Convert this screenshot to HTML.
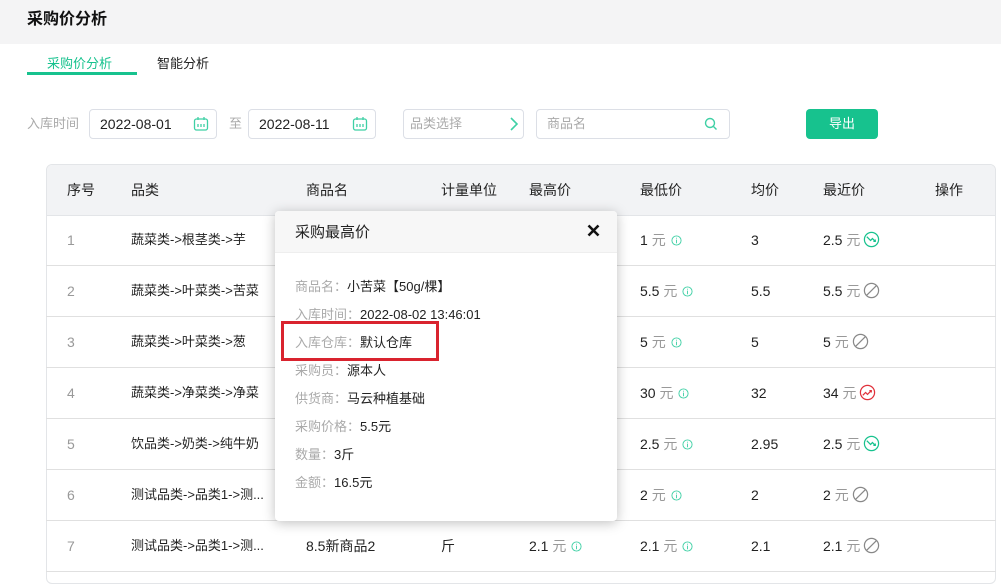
<!DOCTYPE html>
<html><head><meta charset="utf-8"><style>
*{margin:0;padding:0;box-sizing:border-box}
body{width:1001px;height:575px;overflow:hidden;background:#fff;font-family:"Liberation Sans","Noto Sans CJK SC",sans-serif;font-size:14px;color:#222;position:relative}
.a{position:absolute;white-space:nowrap}
.hdr{left:0;top:0;width:1001px;height:44px;background:#f4f4f5}
.box{position:absolute;border:1px solid #dcdfe6;border-radius:4px;height:30px;top:109px;background:#fff}
.box span{line-height:28px;top:0}
.ph{color:#aaa}
.tbl{left:46px;top:164px;width:950px;height:420px;border:1px solid #e3e5e8;border-radius:6px;overflow:hidden}
.th{left:0;top:0;width:950px;height:51px;background:#f2f3f5;border-bottom:1px solid #e3e5e8}
.g{color:#999}
.c{height:50px;line-height:50px}
.pop{left:275px;top:211px;width:342px;height:310px;background:#fff;border-radius:4px;box-shadow:0 2px 12px rgba(0,0,0,.25);overflow:hidden}
.pl{color:#aaa}
.pop .ln{left:20px;height:28px;line-height:28px;font-size:13px}
</style></head><body>
<div class="a hdr"></div>
<div class="a" style="left:27px;top:8px;line-height:24px;font-size:16px;font-weight:bold;color:#111">采购价分析</div>
<div class="a" style="left:47px;top:54px;line-height:20px;font-size:13px;color:#17c28e">采购价分析</div>
<div class="a" style="left:27px;top:72px;width:110px;height:3px;background:#17c28e"></div>
<div class="a" style="left:157px;top:54px;line-height:20px;font-size:13px;color:#222">智能分析</div>

<div class="a ph" style="left:27px;top:114px;line-height:20px;font-size:13px">入库时间</div>
<div class="box" style="left:89px;width:128px"><span class="a" style="left:10px">2022-08-01</span>
<svg class="a" style="left:103px;top:6px" width="16" height="16" viewBox="0 0 16 16" fill="none" stroke="#3fd0a5" stroke-width="1.3"><rect x="1.5" y="3" width="13" height="11" rx="2"/><path d="M5 1v3M11 1v3M5 8v3M8 8v3M11 8v3"/></svg></div>
<div class="a ph" style="left:229px;top:114px;line-height:20px;font-size:13px">至</div>
<div class="box" style="left:248px;width:128px"><span class="a" style="left:10px">2022-08-11</span>
<svg class="a" style="left:103px;top:6px" width="16" height="16" viewBox="0 0 16 16" fill="none" stroke="#3fd0a5" stroke-width="1.3"><rect x="1.5" y="3" width="13" height="11" rx="2"/><path d="M5 1v3M11 1v3M5 8v3M8 8v3M11 8v3"/></svg></div>
<div class="box" style="left:403px;width:121px"><span class="a ph" style="left:6px;font-size:13px">品类选择</span>
<svg class="a" style="left:105px;top:7px" width="10" height="14" viewBox="0 0 10 14" fill="none" stroke="#3fd0a5" stroke-width="1.6"><path d="M2 1l6 6-6 6"/></svg></div>
<div class="box" style="left:536px;width:194px"><span class="a ph" style="left:10px;font-size:13px">商品名</span>
<svg class="a" style="left:167px;top:7px" width="14" height="14" viewBox="0 0 14 14" fill="none" stroke="#3fd0a5" stroke-width="1.4"><circle cx="6" cy="6" r="4.5"/><path d="M9.5 9.5l3 3"/></svg></div>
<div class="a" style="left:806px;top:109px;width:72px;height:30px;background:#17c28e;border-radius:4px;color:#fff;text-align:center;line-height:30px;font-size:13px">导出</div>

<div class="a tbl">
<div class="a th"></div>
<div class="a c" style="left:20px;top:0">序号</div><div class="a c" style="left:84px;top:0">品类</div><div class="a c" style="left:259px;top:0">商品名</div><div class="a c" style="left:394px;top:0">计量单位</div><div class="a c" style="left:482px;top:0">最高价</div><div class="a c" style="left:593px;top:0">最低价</div><div class="a c" style="left:704px;top:0">均价</div><div class="a c" style="left:776px;top:0">最近价</div><div class="a c" style="left:888px;top:0">操作</div>
</div>
<div id="rows"></div>
<script>
var d=[["1","蔬菜类->根茎类->芋","","","","1","3","2.5","dn"],["2","蔬菜类->叶菜类->苦菜","","","","5.5","5.5","5.5","no"],["3","蔬菜类->叶菜类->葱","","","","5","5","5","no"],["4","蔬菜类->净菜类->净菜","","","","30","32","34","up"],["5","饮品类->奶类->纯牛奶","","","","2.5","2.95","2.5","dn"],["6","测试品类->品类1->测...","","","","2","2","2","no"],["7","测试品类->品类1->测...","8.5新商品2","斤","2.1","2.1","2.1","2.1","no"]];
var info='<svg width="11" height="11" viewBox="0 0 12 12" style="vertical-align:-1px;margin-left:5px" fill="none" stroke="#3fd0a5"><circle cx="6" cy="6" r="5"/><path d="M6 5v4M6 3v1"/></svg>';
var ic={dn:'<svg width="17" height="17" viewBox="0 0 18 18" style="vertical-align:-3px;margin-left:3px" fill="none" stroke="#17c28e" stroke-width="1.3"><circle cx="9" cy="9" r="7.5"/><path d="M4 6l4 4 2-2 3 3M13 9v2h-2"/></svg>',up:'<svg width="17" height="17" viewBox="0 0 18 18" style="vertical-align:-3px;margin-left:3px" fill="none" stroke="#e0303a" stroke-width="1.3"><circle cx="9" cy="9" r="7.5"/><path d="M4 12l3-3 2 2 4-4M11 7h2v2"/></svg>',no:'<svg width="17" height="17" viewBox="0 0 18 18" style="vertical-align:-3px;margin-left:3px" fill="none" stroke="#888" stroke-width="1.3"><circle cx="9" cy="9" r="7.5"/><path d="M4 14L14 4"/></svg>'};
var h='';
for(var i=0;i<d.length;i++){var r=d[i],y=215+51*i;
h+='<div class="a" style="left:46px;top:'+(y+50)+'px;width:950px;height:1px;background:#e0e0e0"></div>';
var t=y;
h+='<div class="a c g" style="left:67px;top:'+t+'px">'+r[0]+'</div>';
h+='<div class="a c" style="left:131px;top:'+t+'px;font-size:13px">'+r[1]+'</div>';
if(r[2])h+='<div class="a c" style="left:306px;top:'+t+'px">'+r[2]+'</div>';
if(r[3])h+='<div class="a c" style="left:441px;top:'+t+'px">'+r[3]+'</div>';
if(r[4])h+='<div class="a c" style="left:529px;top:'+t+'px">'+r[4]+' <span class="g">元</span>'+info+'</div>';
h+='<div class="a c" style="left:640px;top:'+t+'px">'+r[5]+' <span class="g">元</span>'+info+'</div>';
h+='<div class="a c" style="left:751px;top:'+t+'px">'+r[6]+'</div>';
h+='<div class="a c" style="left:823px;top:'+t+'px">'+r[7]+' <span class="g">元</span>'+ic[r[8]]+'</div>';}
document.getElementById('rows').innerHTML=h;
</script>

<div class="a pop">
<div class="a" style="left:0;top:0;width:342px;height:42px;background:#f7f7f7;border-bottom:1px solid #eee"></div>
<div class="a" style="left:20px;top:0;line-height:44px;font-size:15px;color:#222">采购最高价</div>
<svg class="a" style="left:312px;top:13px" width="13" height="13" viewBox="0 0 13 13" stroke="#111" stroke-width="2.6"><path d="M1.5 1.5l10 10M11.5 1.5l-10 10"/></svg>
<div class="a ln" style="top:62px"><span class="pl">商品名：</span>小苦菜【50g/棵】</div>
<div class="a ln" style="top:90px"><span class="pl">入库时间：</span>2022-08-02 13:46:01</div>
<div class="a ln" style="top:118px"><span class="pl">入库仓库：</span>默认仓库</div>
<div class="a ln" style="top:146px"><span class="pl">采购员：</span>源本人</div>
<div class="a ln" style="top:174px"><span class="pl">供货商：</span>马云种植基础</div>
<div class="a ln" style="top:202px"><span class="pl">采购价格：</span>5.5元</div>
<div class="a ln" style="top:230px"><span class="pl">数量：</span>3斤</div>
<div class="a ln" style="top:258px"><span class="pl">金额：</span>16.5元</div>
</div>
<div class="a" style="left:281px;top:321px;width:158px;height:40px;border:3px solid #d9232e"></div>
</body></html>
